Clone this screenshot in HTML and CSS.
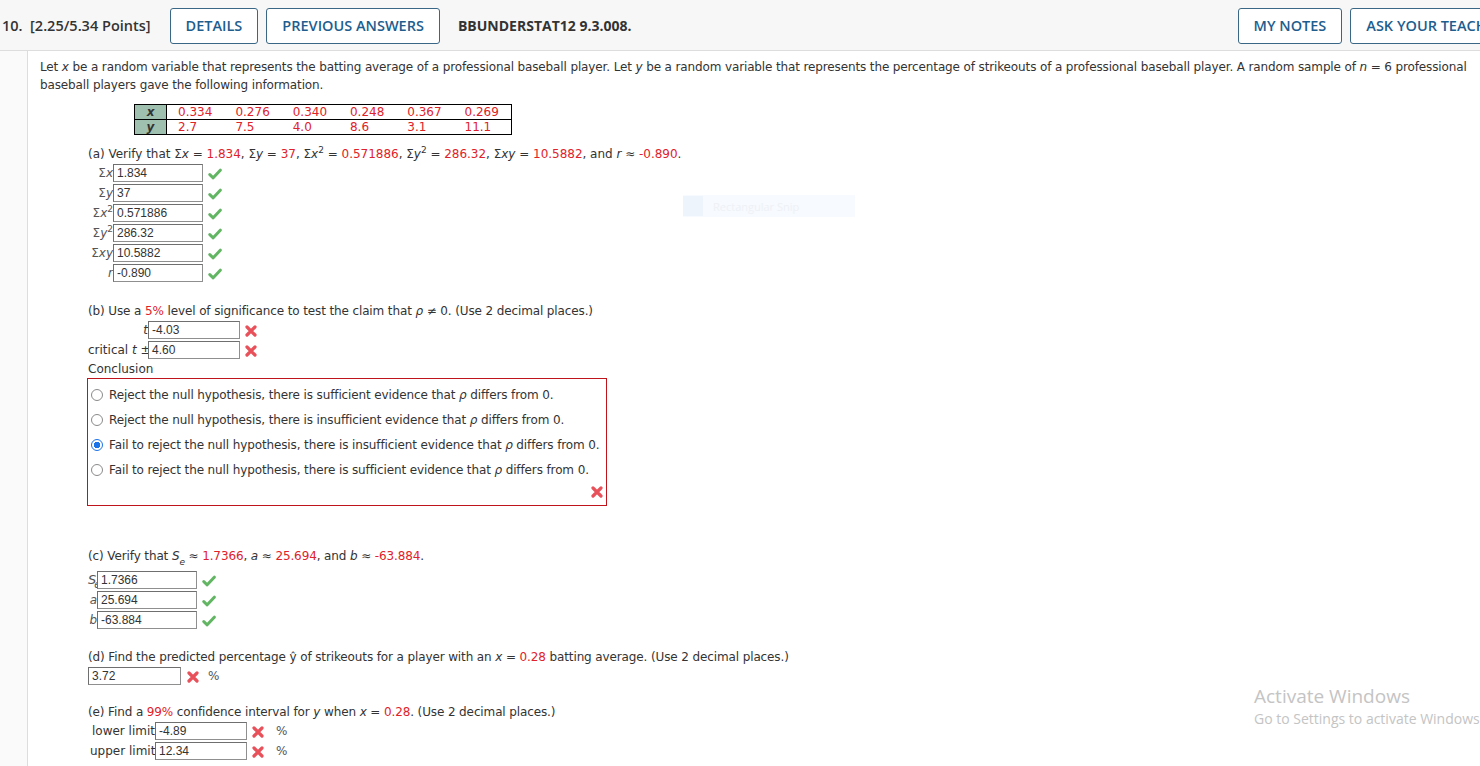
FILE: index.html
```html
<!DOCTYPE html>
<html>
<head>
<meta charset="utf-8">
<title>Question 10</title>
<link rel="stylesheet" href="styles.css">
</head>
<body>
<div class="page">
  <header class="topbar">
    <div class="q-title">10. &nbsp;[2.25/5.34 Points]</div>
    <button class="btn btn-details">DETAILS</button>
    <button class="btn">PREVIOUS ANSWERS</button>
    <div class="code">BBUNDERSTAT12 9.3.008.</div>
    <div class="right">
      <button class="btn">MY NOTES</button>
      <button class="btn">ASK YOUR TEACHER</button>
    </div>
  </header>

  <div class="main">
    <div class="gutter"></div>
    <div class="content">
      <p class="intro">Let <i>x</i> be a random variable that represents the batting average of a professional baseball player. Let <i>y</i> be a random variable that represents the percentage of strikeouts of a professional baseball player. A random sample of <i>n</i> = 6 professional baseball players gave the following information.</p>

      <table class="data">
        <tr><th><i>x</i></th><td>0.334</td><td>0.276</td><td>0.340</td><td>0.248</td><td>0.367</td><td>0.269</td></tr>
        <tr><th><i>y</i></th><td>2.7</td><td>7.5</td><td>4.0</td><td>8.6</td><td>3.1</td><td>11.1</td></tr>
      </table>

      <section class="part part-a">
        <div class="q">(a) Verify that Σ<i>x</i> = <span class="red">1.834</span>, Σ<i>y</i> = <span class="red">37</span>, Σ<i>x</i><sup>2</sup> = <span class="red">0.571886</span>, Σ<i>y</i><sup>2</sup> = <span class="red">286.32</span>, Σ<i>xy</i> = <span class="red">10.5882</span>, and <i>r</i> ≈ <span class="red">-0.890</span>.</div>
        <div class="answers ans-a">
          <span class="lbl">Σ<i>x</i></span><span class="inp">1.834</span><span class="mark"><svg class="ok" viewBox="0 0 14 12"><path d="M1.8 6.6 L5.2 9.8 L12.3 2.2"/></svg></span>
          <span class="lbl">Σ<i>y</i></span><span class="inp">37</span><span class="mark"><svg class="ok" viewBox="0 0 14 12"><path d="M1.8 6.6 L5.2 9.8 L12.3 2.2"/></svg></span>
          <span class="lbl">Σ<i>x</i><sup>2</sup></span><span class="inp">0.571886</span><span class="mark"><svg class="ok" viewBox="0 0 14 12"><path d="M1.8 6.6 L5.2 9.8 L12.3 2.2"/></svg></span>
          <span class="lbl">Σ<i>y</i><sup>2</sup></span><span class="inp">286.32</span><span class="mark"><svg class="ok" viewBox="0 0 14 12"><path d="M1.8 6.6 L5.2 9.8 L12.3 2.2"/></svg></span>
          <span class="lbl">Σ<i>xy</i></span><span class="inp">10.5882</span><span class="mark"><svg class="ok" viewBox="0 0 14 12"><path d="M1.8 6.6 L5.2 9.8 L12.3 2.2"/></svg></span>
          <span class="lbl"><i>r</i></span><span class="inp">-0.890</span><span class="mark"><svg class="ok" viewBox="0 0 14 12"><path d="M1.8 6.6 L5.2 9.8 L12.3 2.2"/></svg></span>
        </div>
      </section>

      <section class="part part-b">
        <div class="q">(b) Use a <span class="red">5%</span> level of significance to test the claim that <i>ρ</i> ≠ 0. (Use 2 decimal places.)</div>
        <div class="answers ans-b">
          <span class="lbl"><i>t</i></span><span class="inp">-4.03</span><span class="mark"><svg class="bad" viewBox="0 0 12 12"><path d="M2 2 L10 10 M10 2 L2 10"/></svg></span>
          <span class="lbl">critical <i>t</i> ±</span><span class="inp">4.60</span><span class="mark"><svg class="bad" viewBox="0 0 12 12"><path d="M2 2 L10 10 M10 2 L2 10"/></svg></span>
        </div>
        <div class="concl">Conclusion</div>
        <div class="choices">
          <label class="choice"><span class="radio"></span><span>Reject the null hypothesis, there is sufficient evidence that <i>ρ</i> differs from 0.</span></label>
          <label class="choice"><span class="radio"></span><span>Reject the null hypothesis, there is insufficient evidence that <i>ρ</i> differs from 0.</span></label>
          <label class="choice"><span class="radio checked"></span><span>Fail to reject the null hypothesis, there is insufficient evidence that <i>ρ</i> differs from 0.</span></label>
          <label class="choice"><span class="radio"></span><span>Fail to reject the null hypothesis, there is sufficient evidence that <i>ρ</i> differs from 0.</span></label>
          <div class="choice-mark"><svg class="bad" viewBox="0 0 12 12"><path d="M2 2 L10 10 M10 2 L2 10"/></svg></div>
        </div>
      </section>

      <section class="part part-c">
        <div class="q">(c) Verify that <i>S</i><sub><i>e</i></sub> ≈ <span class="red">1.7366</span>, <i>a</i> ≈ <span class="red">25.694</span>, and <i>b</i> ≈ <span class="red">-63.884</span>.</div>
        <div class="answers ans-c">
          <span class="lbl se"><i>S</i><sub><i>e</i></sub></span><span class="inp">1.7366</span><span class="mark"><svg class="ok" viewBox="0 0 14 12"><path d="M1.8 6.6 L5.2 9.8 L12.3 2.2"/></svg></span>
          <span class="lbl"><i>a</i></span><span class="inp">25.694</span><span class="mark"><svg class="ok" viewBox="0 0 14 12"><path d="M1.8 6.6 L5.2 9.8 L12.3 2.2"/></svg></span>
          <span class="lbl"><i>b</i></span><span class="inp">-63.884</span><span class="mark"><svg class="ok" viewBox="0 0 14 12"><path d="M1.8 6.6 L5.2 9.8 L12.3 2.2"/></svg></span>
        </div>
      </section>

      <section class="part part-d">
        <div class="q">(d) Find the predicted percentage ŷ of strikeouts for a player with an <i>x</i> = <span class="red">0.28</span> batting average. (Use 2 decimal places.)</div>
        <div class="answers ans-d">
          <span class="inp">3.72</span><span class="mark"><svg class="bad" viewBox="0 0 12 12"><path d="M2 2 L10 10 M10 2 L2 10"/></svg></span><span class="unit">%</span>
        </div>
      </section>

      <section class="part part-e">
        <div class="q">(e) Find a <span class="red">99%</span> confidence interval for <i>y</i> when <i>x</i> = <span class="red">0.28</span>. (Use 2 decimal places.)</div>
        <div class="answers ans-e">
          <span class="lbl">lower limit</span><span class="inp">-4.89</span><span class="mark"><svg class="bad" viewBox="0 0 12 12"><path d="M2 2 L10 10 M10 2 L2 10"/></svg></span><span class="unit">%</span>
          <span class="lbl">upper limit</span><span class="inp">12.34</span><span class="mark"><svg class="bad" viewBox="0 0 12 12"><path d="M2 2 L10 10 M10 2 L2 10"/></svg></span><span class="unit">%</span>
        </div>
      </section>
    </div>
  </div>

  <div class="snip"><span class="snip-icon"></span><span class="snip-text">Rectangular Snip</span></div>
  <div class="activate">
    <div class="act-1">Activate Windows</div>
    <div class="act-2">Go to Settings to activate Windows.</div>
  </div>
</div>
</body>
</html>
```

FILE: styles.css
```css
html, body {
  margin: 0;
  padding: 0;
  background: #ffffff;
  overflow: hidden;
}

.page {
  position: relative;
  width: 1480px;
  height: 766px;
  overflow: hidden;
  font-family: "DejaVu Sans", Verdana, sans-serif;
  font-size: 12px;
  color: #333333;
}

/* ---------- header ---------- */
.topbar {
  box-sizing: border-box;
  width: 1545px;
  height: 51px;
  display: flex;
  align-items: center;
  background: #f7f7f7;
  border-bottom: 1px solid #dddddd;
  font-family: "Open Sans", sans-serif;
  padding-left: 2px;
  padding-right: 17px;
}

.q-title {
  font-size: 14.5px;
  font-weight: 600;
  color: #333333;
  margin-right: 19px;
  white-space: pre;
}

.btn {
  box-sizing: border-box;
  height: 36px;
  padding: 0 15px;
  margin: 1px 8px 0 0;
  background: #ffffff;
  border: 1px solid #3a6785;
  border-radius: 3px;
  font-family: "Open Sans", sans-serif;
  font-size: 14.5px;
  font-weight: 600;
  color: #1e5e8e;
}

.code {
  margin-left: 10px;
  font-size: 14px;
  font-weight: 700;
  color: #333333;
}

.right {
  margin-left: auto;
  display: flex;
}

/* ---------- main area ---------- */
.main {
  display: flex;
  min-height: 720px;
}

.gutter {
  width: 27px;
  flex: none;
  background: #fafafa;
  border-right: 1px solid #dddddd;
}

.content {
  flex: 1;
}

.intro {
  margin: 7px 0 0 12px;
  line-height: 18px;
  width: 1440px;
  letter-spacing: -0.13px;
}

.red {
  color: #e0222a;
}

/* data table */
.data {
  margin: 10px 0 0 106px;
  width: 378px;
  border-collapse: collapse;
  border: 1px solid #000000;
  font-size: 12px;
  line-height: 14px;
}

.data th {
  width: 31px;
  background: #9fc0ae;
  border: 1px solid #000000;
  font-weight: 700;
  color: #333333;
  padding: 0;
  text-align: center;
}

.data td {
  color: #e0222a;
  padding: 0 0 0 11px;
  text-align: left;
}

.data tr:first-child td {
  border-bottom: 1px solid #000000;
}

/* parts */
.part {
  margin-left: 60px;
}

.q {
  line-height: 18px;
  white-space: nowrap;
  letter-spacing: -0.12px;
}

.part-a .q {
  letter-spacing: -0.02px;
}

.q sup, .lbl sup {
  font-size: 9px;
  line-height: 0;
  vertical-align: 5px;
}

.q sub {
  font-size: 9px;
  line-height: 0;
  vertical-align: -5px;
}

.part-a { margin-top: 10px; }
.part-b { margin-top: 18px; }
.part-c { margin-top: 41px; }
.part-d { margin-top: 17px; }
.part-e { margin-top: 16px; }

.answers {
  display: grid;
  align-items: center;
  margin-top: 1px;
}

.ans-a { grid-template-columns: 25px 90px 24px; grid-auto-rows: 20px; }
.ans-b { grid-template-columns: 60px 92px 24px; grid-auto-rows: 20px; }
.ans-c { grid-template-columns: 14px 100px 24px; grid-auto-rows: 20px; margin-top: 6px; margin-left: -5px; }
.ans-d { grid-template-columns: 93px 24px 20px; grid-auto-rows: 20px; margin-top: 1px; }
.ans-e { grid-template-columns: 65px 92px 26px 20px; grid-auto-rows: 20px; margin-top: 1px; margin-left: 2px; }

.lbl {
  text-align: right;
  white-space: nowrap;
  line-height: 18px;
  align-self: start;
}

.ans-a .lbl, .ans-c .lbl {
  color: #555555;
}

.lbl.se {
  font-size: 13px;
  text-align: left;
  padding-left: 5px;
}

.lbl.se sub {
  font-size: 10px;
  line-height: 0;
  vertical-align: -4px;
  margin-left: -2px;
}

.inp {
  box-sizing: border-box;
  height: 18px;
  align-self: start;
  border: 1px solid #8f8f8f;
  border-top-color: #6f6f6f;
  border-left-color: #6f6f6f;
  background: #ffffff;
  font-family: "Liberation Sans", Arial, sans-serif;
  font-size: 12px;
  line-height: 16px;
  padding: 0 3px;
  color: #333333;
}

.mark {
  display: flex;
  align-items: center;
  padding-left: 5px;
}

.ok {
  width: 14px;
  height: 12px;
  fill: none;
  stroke: #62b562;
  stroke-width: 3;
  stroke-linecap: round;
  stroke-linejoin: round;
}

.bad {
  width: 12px;
  height: 12px;
  fill: none;
  stroke: #e8505a;
  stroke-width: 3.2;
  stroke-linecap: round;
}

.unit {
  color: #555555;
  align-self: start;
  line-height: 18px;
  padding-left: 3px;
}

.ans-d .mark { padding-left: 6px; }
.ans-e .mark { padding-left: 5px; }

/* conclusion box */
.concl {
  line-height: 16px;
}

.choices {
  box-sizing: border-box;
  width: 520px;
  margin: 1px 0 0 -1px;
  border: 1px solid #c0141c;
  padding: 3px 0 3px 3px;
}

.choice {
  display: flex;
  align-items: center;
  height: 25px;
  white-space: nowrap;
  letter-spacing: -0.12px;
}

.radio {
  box-sizing: border-box;
  width: 12px;
  height: 12px;
  border: 1px solid #8a8a8a;
  border-radius: 50%;
  margin-right: 6px;
  background: #ffffff;
  flex: none;
}

.radio.checked {
  border: 1px solid #1a73e8;
  background: radial-gradient(circle, #1a73e8 0 3px, #ffffff 3.5px);
}

.choice-mark {
  display: flex;
  justify-content: flex-end;
  padding-right: 3px;
  height: 20px;
  align-items: center;
}

/* overlays */
.snip {
  position: absolute;
  left: 683px;
  top: 195px;
  width: 172px;
  height: 22px;
  display: flex;
  align-items: center;
  background: #f7fafe;
}

.snip-icon {
  width: 20px;
  height: 20px;
  background: #eef4fb;
  margin-right: 10px;
}

.snip-text {
  font-family: "Open Sans", sans-serif;
  font-size: 11px;
  color: #eef1f6;
}

.activate {
  position: absolute;
  left: 1254px;
  top: 683px;
  font-family: "Open Sans", sans-serif;
  color: #c4c4c4;
  white-space: nowrap;
}

.act-1 {
  font-size: 19px;
  line-height: 26px;
}

.act-2 {
  font-size: 14px;
  line-height: 20px;
}
```
